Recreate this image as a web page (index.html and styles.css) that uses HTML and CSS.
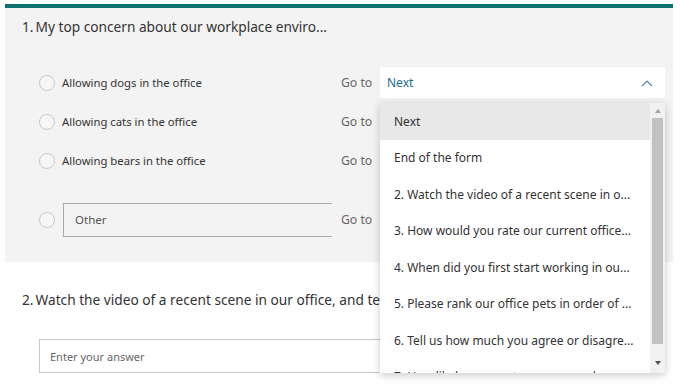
FILE: index.html
```html
<!DOCTYPE html>
<html>
<head>
<meta charset="utf-8">
<link rel="stylesheet" href="styles.css">
</head>
<body>
<div class="form">
  <section class="q1">
    <div class="qtitle"><span class="num">1.</span>My top concern about our workplace enviro...</div>
    <div class="options">
      <div class="row">
        <span class="radio"></span>
        <span class="label">Allowing dogs in the office</span>
        <span class="goto">Go to</span>
        <div class="select"><span class="sel-text">Next</span>
          <svg class="chev" width="12" height="8" viewBox="0 0 12 8"><path d="M1 7 L6 2 L11 7" fill="none" stroke="#5b84a8" stroke-width="1.2"/></svg>
        </div>
      </div>
      <div class="row">
        <span class="radio"></span>
        <span class="label">Allowing cats in the office</span>
        <span class="goto">Go to</span>
      </div>
      <div class="row">
        <span class="radio"></span>
        <span class="label">Allowing bears in the office</span>
        <span class="goto">Go to</span>
      </div>
      <div class="row row-other">
        <span class="radio"></span>
        <span class="other-input">Other</span>
        <span class="goto">Go to</span>
      </div>
    </div>
  </section>
  <section class="q2">
    <div class="qtitle"><span class="num">2.</span>Watch the video of a recent scene in our office, and tell us what you think</div>
    <div class="answer">Enter your answer</div>
  </section>

  <div class="menu">
    <ul class="menu-list">
      <li class="item active">Next</li>
      <li class="item">End of the form</li>
      <li class="item">2. Watch the video of a recent scene in o...</li>
      <li class="item">3. How would you rate our current office...</li>
      <li class="item">4. When did you first start working in ou...</li>
      <li class="item">5. Please rank our office pets in order of ...</li>
      <li class="item">6. Tell us how much you agree or disagre...</li>
      <li class="item">7. How likely are you to recommend our ...</li>
    </ul>
    <div class="scrollbar">
      <span class="arrow up"></span>
      <span class="thumb"></span>
      <span class="arrow down"></span>
    </div>
  </div>
</div>
</body>
</html>
```

FILE: styles.css
```css
* { box-sizing: border-box; }
html, body {
  margin: 0;
  padding: 0;
  background: #ffffff;
  font-family: "Noto Sans", "Open Sans", sans-serif;
  color: #333333;
  overflow: hidden;
}
.form {
  position: relative;
  width: 680px;
  height: 392px;
  padding-top: 4px;
}
.q1 {
  margin-left: 5px;
  width: 668px;
  background: #f3f3f3;
  border-top: 4px solid #0b7270;
  padding: 8px 0 23px 17px;
}
.qtitle {
  font-size: 13.7px;
  line-height: 22px;
  white-space: nowrap;
  overflow: hidden;
  color: #333333;
}
.num { margin-right: 2px; }
.options {
  margin-top: 25px;
  padding-left: 17px;
}
.row {
  display: grid;
  grid-template-columns: 23px 279px 39px 285px;
  align-items: center;
  height: 39px;
}
.row-other {
  margin-top: 20px;
}
.radio {
  width: 16px;
  height: 16px;
  border: 1px solid #c8c8c8;
  border-radius: 50%;
  background: #f6f6f6;
}
.label {
  font-size: 11.3px;
  color: #333333;
}
.goto {
  font-size: 12.2px;
  color: #666666;
}
.select {
  height: 31px;
  background: #ffffff;
  display: flex;
  align-items: center;
  justify-content: space-between;
  padding: 0 12px 0 7px;
}
.sel-text {
  font-size: 12px;
  color: #1a6e8a;
}
.other-input {
  margin-left: 1px;
  width: 269px;
  height: 34px;
  border: 1px solid #a8a8a8;
  border-right: none;
  display: flex;
  align-items: center;
  padding-left: 11px;
  font-size: 11.5px;
  color: #555555;
}
.q2 {
  padding: 27px 0 0 22px;
  width: 673px;
}
.answer {
  margin: 28px 0 0 17px;
  width: 610px;
  height: 34px;
  border: 1px solid #c8c8c8;
  display: flex;
  align-items: center;
  padding-left: 10px;
  font-size: 11px;
  color: #666666;
}
.menu {
  position: absolute;
  left: 380px;
  top: 103px;
  width: 285px;
  height: 270px;
  background: #ffffff;
  box-shadow: 0 2px 8px rgba(0, 0, 0, 0.22);
  display: flex;
  overflow: hidden;
}
.menu-list {
  list-style: none;
  margin: 0;
  padding: 0;
  flex: 1;
}
.item {
  height: 36.5px;
  display: flex;
  align-items: center;
  padding-left: 14px;
  font-size: 12px;
  color: #333333;
  white-space: nowrap;
}
.item.active {
  background: #e8e8e8;
}
.scrollbar {
  width: 15px;
  background: #f1f1f1;
  display: flex;
  flex-direction: column;
  align-items: center;
  padding: 4px 0;
}
.thumb {
  width: 11px;
  flex: 1;
  margin: 5px 0 17px;
  background: #c1c1c1;
}
.arrow {
  width: 0;
  height: 0;
  border-left: 3.5px solid transparent;
  border-right: 3.5px solid transparent;
}
.arrow.up {
  margin-top: 2px;
  border-bottom: 4px solid #a3a3a3;
}
.arrow.down {
  margin-bottom: 4px;
  border-top: 4px solid #505050;
}
```
